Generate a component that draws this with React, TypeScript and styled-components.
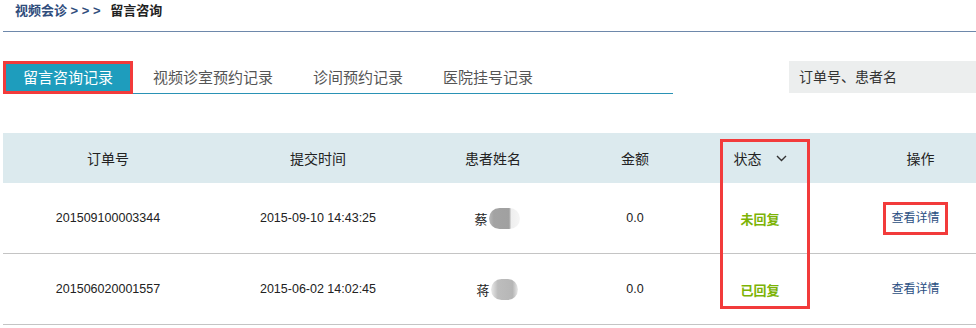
import * as React from "react";
import styled, { createGlobalStyle } from "styled-components";

const GlobalStyle = createGlobalStyle`
  body {
    margin: 0;
    background: #fff;
    font-family: "Liberation Sans", "Noto Sans CJK SC", sans-serif;
    color: #222;
  }
`;

const Page = styled.div`
  padding-left: 3px;
  width: 973px;
`;

const Breadcrumb = styled.div`
  height: 31px;
  padding-left: 12px;
  border-bottom: 1px solid #6e88ab;
  font-size: 13px;
  font-weight: bold;
  line-height: 22px;
  color: #2f4d7c;
  span {
    color: #222;
    margin-left: 6px;
  }
`;

const Toolbar = styled.div`
  display: flex;
  align-items: flex-start;
  margin-top: 29px;
`;

const Tabs = styled.div`
  display: flex;
  width: 670px;
  height: 32px;
  border-bottom: 1px solid #2a92b5;
`;

const Tab = styled.div<{ $active?: boolean }>`
  height: ${p => (p.$active ? 33 : 32)}px;
  margin-bottom: ${p => (p.$active ? -1 : 0)}px;
  padding: 0 20px;
  font-size: 15px;
  line-height: 33px;
  color: ${p => (p.$active ? "#fff" : "#555")};
  background: ${p => (p.$active ? "#1e9dbd" : "transparent")};
  box-shadow: ${p => (p.$active ? "inset 0 0 0 3px #f23b3b" : "none")};
  box-sizing: border-box;
  cursor: pointer;
`;

const Search = styled.input`
  margin-left: auto;
  width: 187px;
  height: 32px;
  box-sizing: border-box;
  border: none;
  outline: none;
  background: #eceeee;
  padding-left: 10px;
  font-family: "Liberation Sans", "Noto Sans CJK SC", sans-serif;
  font-size: 14px;
  color: #333;
  &::placeholder {
    color: #333;
  }
`;

const Table = styled.div`
  position: relative;
  margin-top: 39px;
`;

const cols = "210px 210px 140px 144px 106px 1fr";

const HeadRow = styled.div`
  display: grid;
  grid-template-columns: ${cols};
  height: 50px;
  align-items: center;
  background: #dceaee;
  font-size: 14px;
  color: #222;
`;

const Row = styled.div`
  display: grid;
  grid-template-columns: ${cols};
  height: 70px;
  align-items: center;
  border-bottom: 1px solid #c4c4c4;
  font-size: 12.5px;
  color: #222;
`;

const Cell = styled.div<{ $shift?: number }>`
  display: flex;
  justify-content: center;
  align-items: center;
  padding-left: ${p => p.$shift ?? 0}px;
`;

const Chevron = styled.svg`
  margin-left: 14px;
`;

const Name = styled.span`
  display: inline-flex;
  align-items: center;
  font-size: 13px;
  margin-left: 8px;
`;

const Blur = styled.span<{ $wide?: boolean }>`
  display: inline-block;
  width: ${p => (p.$wide ? 31 : 27)}px;
  height: 21px;
  margin-left: 1px;
  border-radius: 11px;
  background: ${p =>
    p.$wide
      ? "linear-gradient(90deg, #b9b9b9 0, #a3a3a3 15%, #a0a0a0 65%, #efefef 72%, #f5f5f5 100%)"
      : "linear-gradient(90deg, #e9e9e9 0, #bdbdbd 25%, #b6b6b6 80%, #e8e8e8 100%)"};
`;

const Status = styled.span`
  font-size: 13px;
  font-weight: bold;
  color: #7cb305;
`;

const Detail = styled.a<{ $marked?: boolean }>`
  padding: 4px 5px;
  border: 3px solid ${p => (p.$marked ? "#f23b3b" : "transparent")};
  font-size: 12px;
  line-height: 19px;
  color: #2a4e82;
  text-decoration: none;
  cursor: pointer;
`;

const StatusMark = styled.div`
  position: absolute;
  left: 717px;
  top: 6px;
  width: 90px;
  height: 170px;
  box-sizing: border-box;
  border: 3px solid #f23b3b;
  pointer-events: none;
`;

const orders = [
  { id: "201509100003344", time: "2015-09-10 14:43:25", name: "蔡", amount: "0.0", status: "未回复", wide: true },
  { id: "201506020001557", time: "2015-06-02 14:02:45", name: "蒋", amount: "0.0", status: "已回复", wide: false },
];

const tabs = ["留言咨询记录", "视频诊室预约记录", "诊间预约记录", "医院挂号记录"];

const App: React.FC = () => {
  return (
    <>
      <GlobalStyle />
      <Page>
        <Breadcrumb>
          视频会诊 &gt; &gt; &gt; <span>留言咨询</span>
        </Breadcrumb>
        <Toolbar>
          <Tabs>
            {tabs.map((t, i) => (
              <Tab key={t} $active={i === 0}>{t}</Tab>
            ))}
          </Tabs>
          <Search placeholder="订单号、患者名" />
        </Toolbar>
        <Table>
          <HeadRow>
            <Cell>订单号</Cell>
            <Cell>提交时间</Cell>
            <Cell>患者姓名</Cell>
            <Cell>金额</Cell>
            <Cell>
              状态
              <Chevron width="11" height="7" viewBox="0 0 11 7">
                <polyline points="1,1 5.5,5.5 10,1" fill="none" stroke="#333" strokeWidth="1.4" />
              </Chevron>
            </Cell>
            <Cell $shift={52}>操作</Cell>
          </HeadRow>
          {orders.map((o, i) => (
            <Row key={o.id}>
              <Cell>{o.id}</Cell>
              <Cell>{o.time}</Cell>
              <Cell>
                <Name>
                  {o.name}
                  <Blur $wide={o.wide} />
                </Name>
              </Cell>
              <Cell>{o.amount}</Cell>
              <Cell>
                <Status>{o.status}</Status>
              </Cell>
              <Cell $shift={42}>
                <Detail $marked={i === 0}>查看详情</Detail>
              </Cell>
            </Row>
          ))}
          <StatusMark />
        </Table>
      </Page>
    </>
  );
};

export default App;
